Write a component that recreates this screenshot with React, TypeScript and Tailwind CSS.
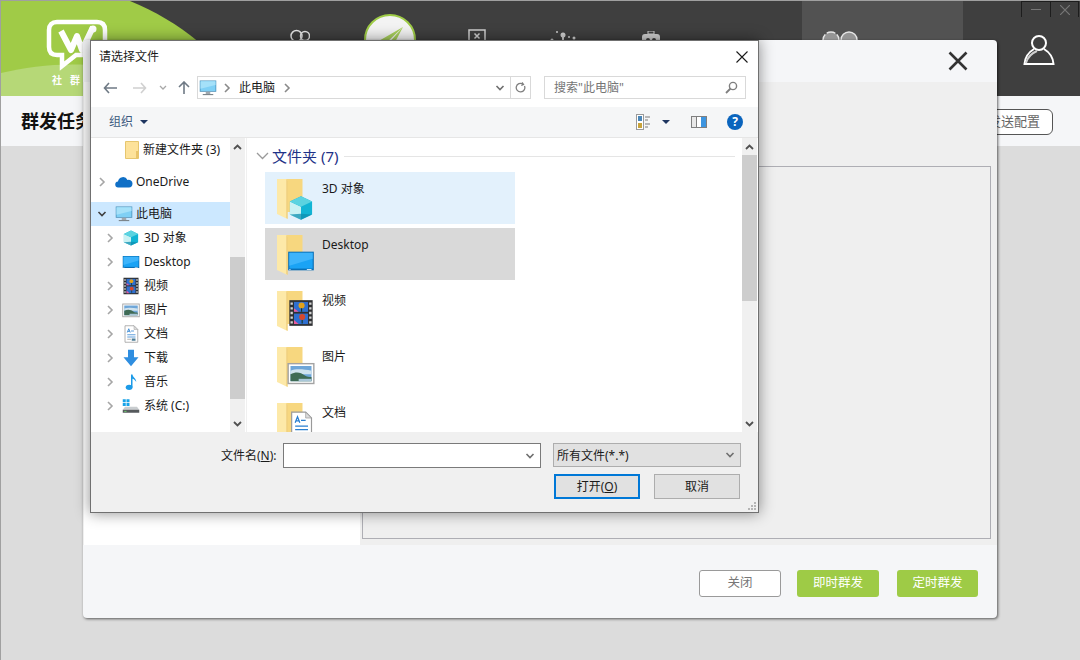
import type { ReactNode } from "react";

const Chevron = ({ open = false, color = "#a6a6a6" }: { open?: boolean; color?: string }) => (
  <svg width="10" height="10" viewBox="0 0 10 10" fill="none" stroke={color} strokeWidth="1.6">
    {open ? <path d="M1.500 3l3.500 3.500L8.500 3" /> : <path d="M3 1l4 4-4 4" />}
  </svg>
);

const Cube = (
  <g>
    <path d="M12 2l9.500 4.500v11L12 22 2.500 17.500v-11z" fill="#12b4d4" />
    <path d="M2.500 6.500L12 11v11l-9.500-4.500z" fill="#c9f1f3" />
    <path d="M12 2l9.500 4.500L12 11 2.500 6.500z" fill="#5bd3e0" />
    <path d="M12 17l9.500.5L12 22l-9.500-4.500z" fill="#0e8fb0" opacity=".75" />
  </g>
);

const Screen = (
  <g>
    <rect x="1" y="4" width="22" height="16" fill="#0a6fb5" />
    <rect x="2" y="5" width="20" height="13.500" fill="#1aa3f5" />
    <path d="M2 5h20v5L2 16z" fill="#3db4fb" />
    <rect x="17" y="18.900" width="4" height=".7" fill="#ffffff" />
    <rect x="2" y="18.900" width="1" height=".7" fill="#ffffff" />
  </g>
);

const Film = (
  <g>
    <rect x="2" y="1" width="20" height="22" fill="#2f3033" />
    <rect x="6" y="2.500" width="12" height="8.500" fill="#2f6fd0" />
    <rect x="6" y="12.500" width="12" height="9" fill="#2f6fd0" />
    <circle cx="12.500" cy="5.500" r="2.600" fill="#e3a21a" />
    <circle cx="13" cy="15.500" r="2.600" fill="#d8482b" />
    <path d="M12 8h1v3h-1zM12.500 18h1v3h-1z" fill="#173a2a" />
    <path d="M6 8l4 3H6zM6 18l4 3.500H6z" fill="#e85a9c" />
    <path d="M3 3h2v2H3zM3 7h2v2H3zM3 11h2v2H3zM3 15h2v2H3zM3 19h2v2H3zM19 3h2v2h-2zM19 7h2v2h-2zM19 11h2v2h-2zM19 15h2v2h-2zM19 19h2v2h-2z" fill="#d4d4d4" />
  </g>
);

const Picture = (
  <g>
    <rect x="1" y="4" width="22" height="17" fill="#ffffff" stroke="#a3a3a3" strokeWidth="1.200" />
    <rect x="3" y="6" width="18" height="13" fill="#6ea6d8" />
    <path d="M3 10c5-2 12-1 18 0v3H3z" fill="#cfe2ee" />
    <path d="M3 13c5-2.500 9-1.500 12 1 2 1.500 4 1.500 6 1.500V19H3z" fill="#3f6b55" />
    <path d="M10 17h11v2H10z" fill="#a9c6d8" />
  </g>
);

const Doc = (
  <g>
    <path d="M4 1h12l5 5v17H4z" fill="#ffffff" stroke="#9a9a9a" />
    <path d="M16 1v5h5z" fill="#dcdcdc" stroke="#9a9a9a" strokeWidth=".6" />
    <path d="M7 10l2-5 2 5M7.800 8.500h2.400" stroke="#2a7fd0" strokeWidth="1.100" fill="none" />
    <path d="M12 8h4M7 13h11M7 16h11" stroke="#2a7fd0" strokeWidth="1" />
    <path d="M7 19h5" stroke="#9a9a9a" strokeWidth="1" />
    <rect x="13" y="18" width="5" height="3" fill="#4d7d96" />
  </g>
);

const Download = <path d="M8 1h8v10h6L12 23 2 11h6z" fill="#2f8ee0" />;

const Note = (
  <g fill="#1c9be8">
    <ellipse cx="9.500" cy="19" rx="4.500" ry="3.500" />
    <path d="M12 2h2c.5 4 5 5 5 10-1.500-3-3.500-4-5-4.500V19h-2z" />
  </g>
);

const Drive = (
  <g>
    <path d="M4 13h16l3 4H1z" fill="#c9cdd0" />
    <path d="M1 17h22v4H1z" fill="#55595c" />
    <rect x="3" y="18.500" width="3" height="1.200" fill="#6fdc6f" />
    <path d="M1 3h4v4H1zM6 3h4v4H6zM1 8h4v4H1zM6 8h4v4H6z" fill="#18a3e8" />
  </g>
);

const Monitor = (
  <svg width="18" height="18" viewBox="0 0 24 24">
    <rect x="1" y="2" width="22" height="15" fill="#4a8fb8" />
    <rect x="2" y="3" width="20" height="13" fill="#7fd0f5" />
    <path d="M2 3h20v5L2 13z" fill="#a5e1f9" />
    <rect x="9" y="17" width="6" height="3" fill="#a0a8ae" />
    <rect x="5" y="20" width="14" height="1.500" fill="#7c858b" />
  </svg>
);

const UpChevron = () => (
  <svg width="9" height="6" viewBox="0 0 9 6" fill="none" stroke="#505050" strokeWidth="1.800">
    <path d="M1 5l3.500-3.500L8 5" />
  </svg>
);

const DownChevron = () => (
  <svg width="9" height="6" viewBox="0 0 9 6" fill="none" stroke="#505050" strokeWidth="1.800">
    <path d="M1 1l3.500 3.500L8 1" />
  </svg>
);

const Icon = ({ children }: { children: ReactNode }) => (
  <svg width="18" height="18" viewBox="0 0 24 24" className="shrink-0">
    {children}
  </svg>
);

// big folder with the little overlay in its corner
const FolderTile = ({ children, y }: { children: ReactNode; y: number }) => (
  <svg width="48" height="48" viewBox="0 0 48 48" className="shrink-0">
    <path d="M12 4h17.500v33H12z" fill="#f7d77f" />
    <path d="M4 4h9.500l1 2v38l-10.500-5z" fill="#fde9a8" />
    <path d="M13.500 4l1 2v38l-1-1z" fill="#e9c46a" />
    <svg x="14" y={y} width="28" height="28" viewBox="0 0 24 24">
      {children}
    </svg>
  </svg>
);

const treeRows: { label: string; icon: ReactNode }[] = [
  { label: "3D 对象", icon: Cube },
  { label: "Desktop", icon: Screen },
  { label: "视频", icon: Film },
  { label: "图片", icon: Picture },
  { label: "文档", icon: Doc },
  { label: "下载", icon: Download },
  { label: "音乐", icon: Note },
  { label: "系统 (C:)", icon: Drive },
];

const tiles: { label: string; icon: ReactNode; bg: string; y: number }[] = [
  { label: "3D 对象", icon: Cube, bg: "bg-[#e3f1fc]", y: 19 },
  { label: "Desktop", icon: Screen, bg: "bg-[#d9d9d9]", y: 16 },
  { label: "视频", icon: Film, bg: "", y: 12 },
  { label: "图片", icon: Picture, bg: "", y: 16 },
  { label: "文档", icon: Doc, bg: "", y: 12 },
];

function FileDialog() {
  return (
    <div className="absolute left-[89px] top-[39px] flex h-[473px] w-[669px] flex-col border border-[#707070] bg-white text-[12px] text-[#1a1a1a] shadow-[0_0_14px_rgba(0,0,0,0.45)]">
      <div className="flex h-[33px] shrink-0 items-center justify-between pb-[2px] pl-2 pr-[10px]">
        <span>请选择文件</span>
        <svg width="12" height="12" viewBox="0 0 12 12" stroke="#1a1a1a" strokeWidth="1.100">
          <path d="M.5.5l11 11M11.500.5l-11 11" />
        </svg>
      </div>

      <div className="flex h-[33px] shrink-0 items-start pt-[2px]">
        <div className="flex h-[23px] w-[106px] shrink-0 items-center">
          <svg width="14" height="12" viewBox="0 0 14 12" fill="none" stroke="#6f7a85" strokeWidth="1.600" className="ml-[12px]">
            <path d="M6 1L1.500 6 6 11M1.500 6H14" />
          </svg>
          <svg width="14" height="12" viewBox="0 0 14 12" fill="none" stroke="#d0d0d0" strokeWidth="1.600" className="ml-[16px]">
            <path d="M8 1l4.500 5L8 11M12.500 6H0" />
          </svg>
          <svg width="8" height="6" viewBox="0 0 8 6" fill="none" stroke="#a8a8a8" strokeWidth="1.300" className="ml-[12px]">
            <path d="M1 1l3 3 3-3" />
          </svg>
          <svg width="12" height="13" viewBox="0 0 12 13" fill="none" stroke="#6f7a85" strokeWidth="1.600" className="ml-[11px]">
            <path d="M1 6l5-5 5 5M6 1v12" />
          </svg>
        </div>
        <div className="flex h-[23px] w-[334px] shrink-0 items-center border border-[#d9d9d9]">
          <span className="ml-[1px]">{Monitor}</span>
          <span className="ml-[5px]"><Chevron color="#8a8a8a" /></span>
          <span className="ml-[7px]">此电脑</span>
          <span className="ml-[7px]"><Chevron color="#8a8a8a" /></span>
          <span className="ml-auto mr-[5px]"><Chevron open color="#6f6f6f" /></span>
          <div className="flex h-full w-[20px] items-center justify-center border-l border-[#d9d9d9]">
            <svg width="11" height="12" viewBox="0 0 11 12" fill="none" stroke="#7f7f7f" strokeWidth="1.300">
              <path d="M9.500 4a4.300 4.300 0 1 1-1.700-2M7 .5l1.500 2-2.200 1" />
            </svg>
          </div>
        </div>
        <div className="ml-[13px] flex h-[23px] w-[202px] shrink-0 items-center border border-[#d9d9d9] pl-[9px] pr-[7px] text-[#757575]">
          <span>搜索"此电脑"</span>
          <svg width="13" height="13" viewBox="0 0 13 13" fill="none" stroke="#7f7f7f" strokeWidth="1.400" className="ml-auto">
            <circle cx="8" cy="5" r="3.600" />
            <path d="M5.500 7.500L1 12" strokeWidth="1.800" />
          </svg>
        </div>
      </div>

      <div className="flex h-[31px] shrink-0 items-center border-b border-[#e6e6e6] bg-[#f5f6f7]">
        <span className="ml-[18px] text-[#3c5a80]">组织</span>
        <span className="ml-[7px] h-0 w-0 border-x-[4px] border-t-[4px] border-x-transparent border-t-[#1e3560]"></span>
        <svg width="16" height="16" viewBox="0 0 16 16" className="ml-[488px]">
          <rect x=".5" y=".5" width="7" height="15" fill="#fff" stroke="#9a9a9a" />
          <rect x="2" y="2" width="4" height="5" fill="#4a86b8" />
          <rect x="2" y="9" width="4" height="5" fill="#c8a33a" />
          <path d="M9 3h5M9 6h3M9 10h5M9 13h3" stroke="#7a7a7a" />
        </svg>
        <span className="ml-[10px] h-0 w-0 border-x-[4px] border-t-[4px] border-x-transparent border-t-[#1e3560]"></span>
        <svg width="16" height="12" viewBox="0 0 16 12" className="ml-[21px]">
          <rect x=".5" y=".5" width="15" height="11" fill="#e8e8e8" stroke="#7f7f7f" />
          <rect x="5" y="1" width="1" height="10" fill="#7f7f7f" />
          <rect x="6" y="1" width="4" height="10" fill="#ffffff" />
          <rect x="10" y="1" width="5" height="10" fill="#3d95e0" />
        </svg>
        <span className="ml-[20px] flex h-[16px] w-[16px] items-center justify-center rounded-full bg-[#0a64bd] text-[12px] font-bold leading-none text-white">?</span>
      </div>

      <div className="flex min-h-0 flex-1">
        <div className="w-[139px] shrink-0 overflow-hidden">
          <div className="flex h-6 items-center pl-[34px]">
            <svg width="14" height="18" viewBox="0 0 14 18" className="shrink-0">
              <path d="M.5.5h13v17H.5z" fill="#fde29a" stroke="#e6c66e" />
              <path d="M11 10h2.500v7H11z" fill="#e9c46a" />
            </svg>
            <span className="ml-[4px] whitespace-nowrap">新建文件夹 (3)</span>
          </div>
          <div className="mt-2 flex h-6 items-center pl-[6px]">
            <Chevron />
            <svg width="18" height="12" viewBox="0 0 18 12" className="ml-[8px] shrink-0">
              <path d="M3.500 11.500a3 3 0 0 1-.5-6 5 5 0 0 1 9.500-1.500 3.700 3.700 0 0 1 5 3.500c0 2.500-1.500 4-3.500 4z" fill="#0f6fc6" />
            </svg>
            <span className="ml-[3px]">OneDrive</span>
          </div>
          <div className="mt-2 flex h-6 items-center bg-[#cce8ff] pl-[6px]">
            <Chevron open color="#404040" />
            <span className="ml-[8px]">{Monitor}</span>
            <span className="ml-[3px]">此电脑</span>
          </div>
          {treeRows.map((row) => (
            <div key={row.label} className="flex h-6 items-center pl-[14px]">
              <Chevron />
              <span className="ml-[7px] flex"><Icon>{row.icon}</Icon></span>
              <span className="ml-[4px] whitespace-nowrap">{row.label}</span>
            </div>
          ))}
          <div className="flex h-6 items-center pl-[31px] pt-[18px]">
            <span className="h-[6px] w-[12px] rounded-t-full bg-[#9bb7cc]"></span>
          </div>
        </div>

        <div className="flex w-[16px] shrink-0 flex-col border-r border-white bg-[#f0f0f0]">
          <div className="flex h-[17px] shrink-0 items-center justify-center"><UpChevron /></div>
          <div className="mt-[102px] h-[142px] shrink-0 bg-[#cdcdcd]"></div>
          <div className="mt-auto flex h-[17px] shrink-0 items-center justify-center"><DownChevron /></div>
        </div>

        <div className="min-w-0 flex-1 overflow-hidden border-l border-[#f0f0f0] pl-[18px]">
          <div className="mt-[7px] flex h-[22px] items-center">
            <svg width="13" height="8" viewBox="0 0 13 8" fill="none" stroke="#9a9a9a" strokeWidth="1.300" className="-ml-[9px]">
              <path d="M1 1l5.500 5.500L12 1" />
            </svg>
            <span className="ml-[3px] text-[15px] text-[#1e3287]">文件夹 (7)</span>
            <span className="ml-[6px] mr-[7px] h-px flex-1 bg-[#e5e5e5]"></span>
          </div>
          <div className="mt-[5px] flex flex-col gap-1">
            {tiles.map((tile) => (
              <div key={tile.label} className={`flex h-[52px] w-[250px] shrink-0 pl-[8px] pt-[3px] ${tile.bg}`}>
                <FolderTile y={tile.y}>{tile.icon}</FolderTile>
                <span className="ml-[1px] mt-[6px] leading-[16px]">{tile.label}</span>
              </div>
            ))}
          </div>
        </div>

        <div className="flex w-[16px] shrink-0 flex-col border-r border-white bg-[#f0f0f0]">
          <div className="flex h-[17px] shrink-0 items-center justify-center"><UpChevron /></div>
          <div className="h-[146px] shrink-0 bg-[#cdcdcd]"></div>
          <div className="mt-auto flex h-[17px] shrink-0 items-center justify-center"><DownChevron /></div>
        </div>
      </div>

      <div className="relative flex h-[80px] shrink-0 flex-col bg-[#f0f0f0]">
        <div className="mt-[11px] flex h-[25px] items-start">
          <span className="ml-[130px] w-[62px] whitespace-nowrap pt-[3px] leading-[20px]">文件名(<span className="underline">N</span>):</span>
          <div className="flex h-[25px] w-[258px] items-center justify-end border border-[#7a7a7a] bg-white pr-[5px]">
            <Chevron open color="#6f6f6f" />
          </div>
          <div className="ml-[12px] flex h-[24px] w-[188px] items-center border border-[#adadad] bg-[#e1e1e1] pl-[3px] pr-[5px]">
            <span className="pt-px">所有文件(*.*)</span>
            <span className="ml-auto"><Chevron open color="#6f6f6f" /></span>
          </div>
        </div>
        <div className="mt-[6px] flex">
          <button className="ml-[463px] h-[25px] w-[86px] border-2 border-[#0078d7] bg-[#e1e1e1]">打开(<span className="underline">O</span>)</button>
          <button className="ml-[14px] h-[25px] w-[86px] border border-[#adadad] bg-[#e1e1e1]">取消</button>
        </div>
        <svg width="10" height="10" viewBox="0 0 10 10" fill="#b5b5b5" className="absolute bottom-[1px] right-[1px]">
          <path d="M7 1h2v2H7zM4 4h2v2H4zM7 4h2v2H7zM1 7h2v2H1zM4 7h2v2H4zM7 7h2v2H7z" />
        </svg>
      </div>
    </div>
  );
}

function TaskModal() {
  return (
    <div className="absolute left-[82px] top-[39px] flex h-[578px] w-[914px] flex-col overflow-hidden rounded-[4px] bg-[#f5f6f8] shadow-[1px_1px_3px_rgba(0,0,0,0.6)]">
      <div className="flex h-[42px] shrink-0 items-center justify-end pr-[29px]">
        <svg width="20" height="20" viewBox="0 0 20 20" stroke="#333333" strokeWidth="2.600">
          <path d="M1.500 1.500l17 17M18.500 1.500l-17 17" />
        </svg>
      </div>
      <div className="flex min-h-0 flex-1 bg-[#efefef]">
        <div className="ml-px w-[276px] shrink-0 bg-white"></div>
        <div className="flex flex-1 pb-[6px] pl-[2px] pr-[6px] pt-[84px]">
          <div className="flex-1 border border-[#aeaeb4]"></div>
        </div>
      </div>
      <div className="flex h-[73px] shrink-0 items-start justify-end pr-[19px] pt-[25px] text-[12.5px]">
        <button className="h-[27px] w-[82px] rounded-[3px] border border-[#9a9a9a] bg-white text-[#777777]">关闭</button>
        <button className="ml-4 h-[27px] w-[82px] rounded-[3px] bg-[#9ecb46] text-white">即时群发</button>
        <button className="ml-[18px] h-[27px] w-[81px] rounded-[3px] bg-[#9ecb46] text-white">定时群发</button>
      </div>
    </div>
  );
}

export default function App() {
  return (
    <div className="relative h-[660px] w-[1080px] overflow-hidden border-l border-t border-[#a0a0a0] bg-[#dcdcdc] font-['Noto_Sans','Noto_Sans_CJK_SC',sans-serif]">
      <header className="relative flex h-[95px] bg-[#3f3f3f]">
        <svg width="300" height="95" viewBox="0 0 300 95" className="shrink-0">
          <path d="M0 0h129c50 20 90 55 120 95H0z" fill="#a0cb47" />
          <path d="M0 72c40-10 90-12 130-2 20 5 40 15 55 25H0z" fill="#b6d877" />
          <path d="M56 21h40c6 0 8 3 8 8v17c0 6-2 8-8 8H75L61 65l0-11h-5c-5 0-8-2-8-8V29c0-5 3-8 8-8z" fill="none" stroke="#fff" strokeWidth="4.500" />
          <path d="M60 30l10 19 6-14 5 14 11-23" fill="none" stroke="#fff" strokeWidth="6" strokeLinejoin="round" />
          <circle cx="92" cy="28" r="3.500" fill="#fff" />
        </svg>
        <span className="absolute left-[51px] top-[72px] whitespace-nowrap text-[10px] font-bold tracking-[8px] text-white">社群工具</span>

        <div className="flex items-start pt-[28px]">
          <svg width="20" height="16" viewBox="0 0 20 16" fill="none" stroke="#e6e6e6" strokeWidth="1.500" className="-ml-[11px] shrink-0">
            <circle cx="6.500" cy="7" r="5.500" />
            <circle cx="15" cy="7" r="4.500" />
          </svg>
          <div className="-mt-[15px] ml-[54px] flex h-[52px] w-[52px] shrink-0 items-center justify-center rounded-full border-2 border-[#9ecb46] bg-[#f3f3f3]">
            <svg width="30" height="30" viewBox="0 0 30 30" fill="#a8d05c"><path d="M28 2L2 17l8 2zM28 2L12 20l1 8 4-5z" /></svg>
          </div>
          <svg width="18" height="16" viewBox="0 0 18 16" fill="none" stroke="#d0d0d0" strokeWidth="1.500" className="ml-[52px] shrink-0">
            <rect x="1" y="1" width="16" height="14" />
            <path d="M6.500 4.500l5 5M11.500 4.500l-5 5" />
          </svg>
          <svg width="26" height="14" viewBox="0 0 26 14" fill="#cfcfcf" className="ml-[64px] mt-[2px] shrink-0">
            <circle cx="13" cy="4" r="2.500" /><rect x="12" y="5" width="2" height="9" /><circle cx="7" cy="1" r="1" /><circle cx="19" cy="6" r="1" /><circle cx="24" cy="7" r="1.500" /><circle cx="2" cy="9" r="1.500" />
          </svg>
          <svg width="22" height="14" viewBox="0 0 22 14" fill="#cfcfcf" className="ml-[64px] mt-[2px] shrink-0">
            <rect x="2" y="3" width="18" height="11" rx="3" /><rect x="8" y="0" width="6" height="3" fill="none" stroke="#cfcfcf" /><circle cx="8" cy="9" r="2" fill="#3f3f3f" /><circle cx="14" cy="9" r="2" fill="#3f3f3f" />
          </svg>
        </div>

        <div className="ml-auto flex">
          <div className="flex w-[161px] justify-start bg-[#525252] pl-[20px] pt-[29px]">
            <svg width="36" height="18" viewBox="0 0 36 18" fill="#d8d8d8" stroke="#e6e6e6" strokeWidth="1.400">
              <circle cx="9" cy="10" r="8" fillOpacity=".5" strokeDasharray="9 2" />
              <circle cx="27" cy="10" r="8" fillOpacity=".5" />
            </svg>
          </div>
          <div className="relative w-[117px]">
            <div className="absolute right-[1px] top-0 flex">
              <span className="flex h-[16px] w-[30px] items-center justify-center border-x border-t border-[#1d1d1d]">
                <span className="h-px w-[10px] bg-[#777777]"></span>
              </span>
              <span className="flex h-[16px] w-[28px] items-center justify-center border-r border-t border-[#1d1d1d]">
                <svg width="10" height="10" viewBox="0 0 10 10" stroke="#777777" strokeWidth="1.200"><path d="M0 0l10 10M10 0L0 10" /></svg>
              </span>
            </div>
            <svg width="32" height="32" viewBox="0 0 32 32" fill="none" stroke="#ffffff" strokeWidth="2" className="absolute left-[60px] top-[33px]">
              <circle cx="16" cy="9" r="7" />
              <path d="M11 15C6 18 2 23 1.500 30h29C30 23 26 18 21 15" />
              <path d="M3 29c2-7 6-10 11-12" stroke="#cfcfcf" />
            </svg>
          </div>
        </div>
      </header>

      <div className="flex h-[50px] items-center justify-between bg-[#f5f6f8] pl-[20px] pr-[27px]">
        <span className="text-[18px] font-bold text-[#111111]">群发任务</span>
        <button className="mt-[2px] h-[26px] w-[92px] rounded-[6px] border border-[#555555] bg-white pr-[12px] text-right text-[13px] text-[#666666]">发送配置</button>
      </div>

      <TaskModal />
      <FileDialog />
    </div>
  );
}
